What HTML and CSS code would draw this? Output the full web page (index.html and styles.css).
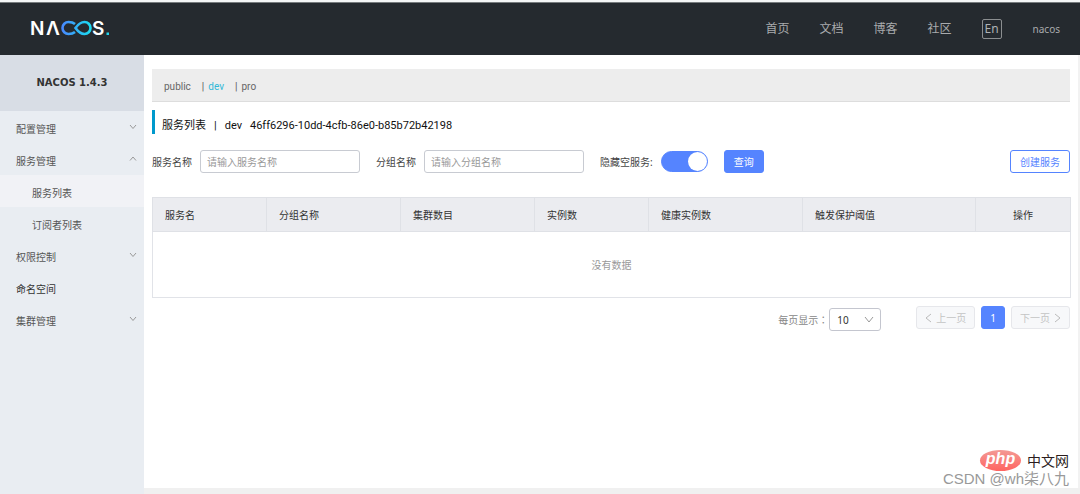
FILE: index.html
```html
<!DOCTYPE html>
<html lang="zh-CN">
<head>
<meta charset="utf-8">
<meta name="viewport" content="width=device-width, initial-scale=1">
<title>NACOS</title>
<link rel="stylesheet" href="styles.css">
</head>
<body>
<header class="topbar">
  <a class="brand" href="#" aria-label="NACOS">
    <svg class="logo" width="80" height="26" viewBox="0 0 80 26">
      <defs>
        <linearGradient id="loop" gradientUnits="userSpaceOnUse" x1="29" x2="60" y1="0" y2="0">
          <stop offset="0" stop-color="#4a86ff"/>
          <stop offset="1" stop-color="#18e0f0"/>
        </linearGradient>
      </defs>
      <text class="logo-text" x="-2" y="19">N</text>
      <text class="logo-text" x="14" y="19">Λ</text>
      <path d="M43 8C41 6.300 39 6 36.500 6a6 6 0 0 0 0 12c2.500 0 4.500-.3 6.500-2M43.500 12C46 8.500 48.500 6 52.500 6a6 6 0 0 1 0 12C48.500 18 46 15.500 43.500 12z" fill="none" stroke="url(#loop)" stroke-width="2.600"/>
      <text class="logo-text" x="60" y="19">S</text>
      <rect x="74.500" y="16.500" width="2.500" height="2.500" fill="#24d5ec"/>
    </svg>
  </a>
  <nav class="topnav">
    <a href="#">首页</a>
    <a href="#">文档</a>
    <a href="#">博客</a>
    <a href="#">社区</a>
    <button class="lang" type="button">En</button>
    <a class="user" href="#">nacos</a>
  </nav>
</header>
<div class="shell">
  <aside class="sidebar">
    <h1 class="version">NACOS 1.4.3</h1>
    <nav class="menu">
      <a class="item" href="#">配置管理<svg class="chev" viewBox="0 0 8 6"><path d="M1 1l3 3.500L7 1"/></svg></a>
      <a class="item" href="#">服务管理<svg class="chev" viewBox="0 0 8 6"><path d="M1 4.500L4 1l3 3.500"/></svg></a>
      <a class="item sub active" href="#">服务列表</a>
      <a class="item sub" href="#">订阅者列表</a>
      <a class="item" href="#">权限控制<svg class="chev" viewBox="0 0 8 6"><path d="M1 1l3 3.500L7 1"/></svg></a>
      <a class="item plain" href="#">命名空间</a>
      <a class="item" href="#">集群管理<svg class="chev" viewBox="0 0 8 6"><path d="M1 1l3 3.500L7 1"/></svg></a>
    </nav>
  </aside>
  <main class="main">
    <div class="content">
      <div class="spaces">
        <a href="#">public</a>
        <span class="bar">|</span><a class="current" href="#">dev</a>
        <span class="bar">|</span><a href="#">pro</a>
      </div>
      <h2 class="title"><span>服务列表</span><span>|</span><span>dev</span><span>46ff6296-10dd-4cfb-86e0-b85b72b42198</span></h2>
      <form class="filters">
        <label for="service">服务名称</label>
        <input class="field" id="service" type="text" placeholder="请输入服务名称">
        <label for="group">分组名称</label>
        <input class="field" id="group" type="text" placeholder="请输入分组名称">
        <label for="hide">隐藏空服务:</label>
        <input class="switch" id="hide" type="checkbox" role="switch" checked>
        <button class="btn primary" type="button">查询</button>
        <button class="btn outline" type="button">创建服务</button>
      </form>
      <table class="services">
        <colgroup><col class="c1"><col class="c2"><col class="c2"><col class="c1"><col class="c3"><col class="c4"><col class="c5"></colgroup>
        <thead>
          <tr><th>服务名</th><th>分组名称</th><th>集群数目</th><th>实例数</th><th>健康实例数</th><th>触发保护阈值</th><th class="center">操作</th></tr>
        </thead>
        <tbody>
          <tr><td colspan="7">没有数据</td></tr>
        </tbody>
      </table>
      <div class="pager">
        <label for="size">每页显示<span lang="zh-TW">：</span></label>
        <span class="select">
          <select id="size"><option>10</option></select>
          <svg class="caret" viewBox="0 0 10 7"><path d="M1 1l4 5 4-5"/></svg>
        </span>
        <div class="pages">
          <button class="page" type="button" disabled><svg class="arrow" viewBox="0 0 7 10"><path d="M6 1L1 5l5 4"/></svg>上一页</button>
          <button class="page on" type="button">1</button>
          <button class="page" type="button" disabled>下一页<svg class="arrow" viewBox="0 0 7 10"><path d="M1 1l5 4-5 4"/></svg></button>
        </div>
      </div>
    </div>
    <div class="scroll"></div>
  </main>
</div>
<div class="watermark">
  <div class="site"><span class="php">php</span><span>中文网</span></div>
  <div class="author">CSDN @wh柒八九</div>
</div>
</body>
</html>
```
FILE: styles.css
```css
* { box-sizing: border-box; }
body {
  margin: 0;
  min-height: 100vh;
  display: flex;
  flex-direction: column;
  position: relative;
  border-top: 2px solid #f4f6f6;
  background: #fff;
  color: #333;
  font: 10px/16px "Noto Sans", "Noto Sans CJK SC", sans-serif;
}
a { color: inherit; text-decoration: none; }
button, input, select { font: inherit; }
svg { flex: none; fill: none; }

.topbar {
  height: 53px;
  display: flex;
  align-items: center;
  justify-content: space-between;
  padding: 0 20px 0 32px;
  border-top: 1px solid #777c7e;
  background: #252a2f;
}
.brand, .logo { display: block; }
.logo { overflow: visible; }
.logo-text { font: 600 19px Inter, sans-serif; fill: #fff; }
.topnav {
  display: flex;
  align-items: center;
  gap: 30px;
  color: #a9abad;
  font-size: 12px;
}
.topnav .user { font-size: 10px; }
.lang {
  width: 20px;
  height: 20px;
  margin: 0 1px 0 0;
  padding: 0;
  border: 1px solid #8b8e90;
  border-radius: 2px;
  background: none;
  color: #b0b2b4;
  line-height: 16px;
}

.shell { flex: 1; display: flex; }
.sidebar { width: 144px; flex: none; background: #e9edf2; }
.version {
  margin: 0;
  padding: 20px 0;
  background: #d8dde5;
  font: bold 10px/16px "DejaVu Sans", sans-serif;
  text-align: center;
}
.item {
  height: 32px;
  display: flex;
  align-items: center;
  justify-content: space-between;
  padding: 4px 7px 0 16px;
  color: #555;
}
.plain { color: #333; }
.sub { padding-left: 32px; }
.active { background: #f1f2f6; }
.chev { width: 8px; height: 6px; margin-bottom: 5px; stroke: #999; }

.main { flex: 1; min-width: 0; display: flex; flex-direction: column; }
.content { flex: 1; padding: 14px 8px 0; border-right: 2px solid #f2f2f2; }
.scroll { height: 6px; background: #f0f0f0; }
.spaces {
  display: flex;
  padding: 10px 12px 6px;
  border-bottom: 1px solid #ddd;
  background: #ededed;
  color: #666;
  font-family: Roboto, "Noto Sans CJK SC", sans-serif;
}
.bar { margin: 0 4px 0 11px; color: #555; }
.spaces .current { color: #33b9d8; }
.title {
  display: flex;
  gap: 8px;
  margin: 8px 0 16px;
  padding: 8px 0 0 7px;
  border-left: 3px solid #09c;
  color: #111;
  font: 400 11px/16px Roboto, "Noto Sans CJK SC", sans-serif;
}
.filters { display: flex; align-items: center; color: #444; }
.filters label { margin-right: 8px; }
.field {
  width: 160px;
  height: 23px;
  margin: 0 16px 0 0;
  padding: 0 6px;
  border: 1px solid #c8cbd2;
  border-radius: 3px;
  background: #fff;
}
.field::placeholder { color: #999; opacity: 1; }
.switch {
  appearance: none;
  width: 47px;
  height: 21px;
  margin: 0 16px 0 0;
  border: 1px solid #5584ff;
  border-radius: 11px;
  background: #5584ff;
  display: flex;
  justify-content: flex-end;
}
.switch::before { content: ""; width: 19px; height: 19px; border-radius: 50%; background: #fff; }
.switch:not(:checked) { justify-content: flex-start; background: #ccc; border-color: #ccc; }
.btn { height: 23px; padding: 0 9px; border: 1px solid #5584ff; border-radius: 3px; line-height: 16px; }
.primary { background: #5584ff; color: #fff; }
.outline { margin-left: auto; background: #fff; color: #5584ff; }

.services {
  width: 100%;
  margin-top: 24px;
  border: 1px solid #e1e3e8;
  border-collapse: collapse;
  table-layout: fixed;
}
.c1 { width: 114px; }
.c2 { width: 134px; }
.c3 { width: 154px; }
.c4 { width: 173px; }
.c5 { width: 95px; }
.services th {
  height: 34px;
  padding: 0 12px;
  border: 1px solid #dfe1e6;
  background: #ebecf0;
  font-weight: 400;
  text-align: left;
}
.services .center { text-align: center; }
.services td { height: 66px; padding: 0; color: #999; text-align: center; }

.pager { display: flex; margin-top: 8px; justify-content: flex-end; color: #888; }
.pager label { padding-top: 6px; }
.pager label span { font-family: "Noto Sans CJK TC", sans-serif; }
.select { position: relative; margin: 2px 35px 0 1px; }
.select select {
  appearance: none;
  width: 52px;
  height: 23px;
  padding: 0 7px;
  border: 1px solid #c4c6cf;
  border-radius: 3px;
  background: #fff;
  color: #333;
}
.caret { position: absolute; right: 7px; top: 8px; width: 10px; height: 7px; stroke: #999; pointer-events: none; }
.pages { display: flex; gap: 6px; }
.page {
  height: 23px;
  display: flex;
  align-items: center;
  gap: 4px;
  padding: 0 8px;
  border: 1px solid #e6e7eb;
  border-radius: 3px;
  background: #f7f8fa;
  color: #c4c4c4;
}
.page.on { border-color: #5584ff; background: #5584ff; color: #fff; }
.arrow { width: 7px; height: 10px; stroke: #bbb; }

.watermark { position: absolute; right: 11px; bottom: 7px; }
.site {
  display: flex;
  align-items: center;
  justify-content: flex-end;
  gap: 6px;
  color: #2b1d1d;
  font-size: 14px;
  line-height: 20px;
}
.php {
  width: 41px;
  height: 21px;
  border-radius: 50%;
  background: linear-gradient(#f39a95, #ff6460);
  color: #fff;
  font: italic bold 16px/18px "Liberation Sans", sans-serif;
  text-align: center;
}
.author {
  color: #999;
  font: 15px/16px "Liberation Sans", "Noto Sans CJK SC", sans-serif;
  white-space: nowrap;
}
```
